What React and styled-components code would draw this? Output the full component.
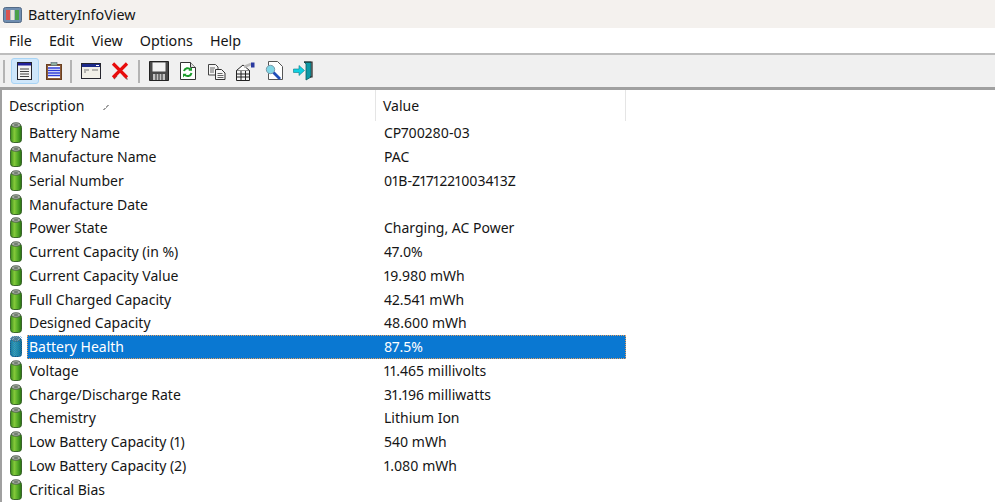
import React from "react";
import styled, { createGlobalStyle } from "styled-components";

const GlobalStyle = createGlobalStyle`
  html, body {
    margin: 0;
    padding: 0;
    background: #fff;
    overflow: hidden;
  }
  body {
    font-family: "Noto Sans", "Open Sans", "Liberation Sans", sans-serif;
    font-variant-numeric: proportional-nums;
  }
`;

const Window = styled.div`
  width: 995px;
  height: 502px;
  overflow: hidden;
  display: flex;
  flex-direction: column;
  background: #fff;
  color: #151515;
`;

const TitleBar = styled.div`
  height: 28px;
  flex: none;
  display: flex;
  align-items: center;
  gap: 6px;
  padding: 1px 0 0 3px;
  box-sizing: border-box;
  background: #f4f1ee;
  font-size: 14.3px;
`;

const MenuBar = styled.div`
  height: 25px;
  flex: none;
  display: flex;
  align-items: center;
  gap: 17px;
  padding: 0 0 0 9px;
  box-sizing: border-box;
  background: #fff;
  font-size: 14.3px;
`;

const Toolbar = styled.div`
  height: 37px;
  flex: none;
  display: flex;
  align-items: center;
  padding-left: 3px;
  box-sizing: border-box;
  background: #f0f0f0;
  border-top: 2px solid #bdbdbd;
  border-bottom: 3px solid #a0a0a0;
`;

const Sep = styled.span`
  flex: none;
  width: 2px;
  height: 23px;
  margin: ${(props) => props.$margin || "0 5px"};
  background: #b4b4b4;
`;

const ToolButton = styled.span`
  flex: none;
  width: 28.8px;
  height: 26px;
  display: flex;
  align-items: center;
  justify-content: center;
  box-sizing: border-box;
  border-radius: 3px;
  border: 1px solid ${(props) => (props.$active ? "#a8d4f5" : "transparent")};
  background: ${(props) => (props.$active ? "#cfe7fb" : "transparent")};
`;

const List = styled.div`
  flex: 1;
  min-height: 0;
  border-left: 2px solid #a0a0a0;
`;

const Header = styled.div`
  height: 31px;
  display: grid;
  grid-template-columns: 374px 250px;
  width: 624px;
  font-size: 14px;
`;

const HeadCell = styled.div`
  display: flex;
  align-items: center;
  gap: 19px;
  padding-left: ${(props) => props.$pad}px;
  padding-top: 0;
  border-right: 1px solid #e5e5e5;
  box-sizing: border-box;
`;

const SortMark = styled.span`
  width: 6px;
  height: 6px;
  margin-top: 3px;
  background: linear-gradient(135deg, transparent 50%, #a0a0a0 50%, #a0a0a0 66%, transparent 66%);
`;

const Rows = styled.div`
  display: flex;
  flex-direction: column;
`;

const Row = styled.div`
  height: 23.75px;
  width: 624px;
  display: grid;
  grid-template-columns: 25px 1fr;
  align-items: center;
  font-size: 14px;
  white-space: nowrap;
`;

const IconCell = styled.span`
  display: flex;
  justify-content: center;
  padding-left: 3px;
`;

const Cells = styled.div`
  height: 100%;
  display: grid;
  grid-template-columns: 349px 250px;
  align-items: center;
  background: ${(props) => (props.$selected ? "#0a78d2" : "transparent")};
  color: ${(props) => (props.$selected ? "#fff" : "inherit")};
  outline: ${(props) => (props.$selected ? "1px dotted #e8a060" : "none")};
  outline-offset: -1px;
`;

const Label = styled.span`
  padding-left: 2px;
`;

const Value = styled.span`
  padding-left: 8px;
`;

const BatteryIcon = ({ selected }) => {
  const id = selected ? "battSel" : "batt";
  return (
    <svg width="12" height="21" viewBox="0 0 12 21">
      <defs>
        <linearGradient id={id} x1="0" x2="1" y1="0" y2="0">
          <stop offset="0" stopColor={selected ? "#1f7f86" : "#3a8a1c"} />
          <stop offset="0.35" stopColor={selected ? "#4aa6a4" : "#84c93a"} />
          <stop offset="0.7" stopColor={selected ? "#2a8f92" : "#4da524"} />
          <stop offset="1" stopColor={selected ? "#16626e" : "#2a6e12"} />
        </linearGradient>
        <pattern id="dither" width="2" height="2" patternUnits="userSpaceOnUse">
          <rect width="1" height="1" fill="#0a78d2" />
          <rect x="1" y="1" width="1" height="1" fill="#0a78d2" />
        </pattern>
      </defs>
      <rect x="0.5" y="2.5" width="11" height="18" rx="3" fill={`url(#${id})`} stroke={selected ? "#164f66" : "#2f5a20"} strokeWidth="0.9" />
      <ellipse cx="6" cy="3" rx="4.4" ry="2.2" fill="#aeb6aa" stroke="#4a5648" strokeWidth="0.9" />
      <ellipse cx="6" cy="3" rx="2.4" ry="1" fill="#6f7a6e" />
      {selected && <rect x="0" y="0" width="12" height="21" rx="3" fill="url(#dither)" opacity="0.7" />}
    </svg>
  );
};

const AppIcon = () => (
  <svg width="19" height="16" viewBox="0 0 19 16">
    <rect x="0.5" y="0.5" width="18" height="15" rx="2" fill="#6f8db0" stroke="#536a86" />
    <rect x="3" y="3" width="4" height="10" fill="#d9534f" />
    <rect x="7.5" y="3" width="4" height="10" fill="#e8e6dc" />
    <rect x="12" y="3" width="4" height="10" fill="#4aa04a" />
  </svg>
);

const ToolIcon = ({ children, w = 18, h = 18 }) => (
  <svg width={w} height={h} viewBox={`0 0 ${w} ${h}`}>
    {children}
  </svg>
);

const icons = {
  report: (
    <ToolIcon>
      <rect x="1.5" y="0.5" width="14" height="17" fill="#f4f4f4" stroke="#26262e" />
      <rect x="2" y="1" width="13" height="2.5" fill="#20209a" />
      <path d="M4 7h9M4 9.5h9M4 12h9M4 14.5h9" stroke="#444" strokeWidth="1.2" />
    </ToolIcon>
  ),
  clip: (
    <ToolIcon>
      <rect x="1.5" y="2.5" width="15" height="15" fill="#8a5a3a" stroke="#6a4020" />
      <rect x="6" y="0.5" width="6" height="3" fill="#8fb0a0" stroke="#567" strokeWidth="0.6" />
      <rect x="3" y="4" width="12" height="12" fill="#fff" />
      <path d="M3 6h12M3 8.5h12M3 11h12M3 13.5h12" stroke="#2a3ad8" strokeWidth="1.5" />
    </ToolIcon>
  ),
  window: (
    <ToolIcon w={20}>
      <rect x="0.5" y="1.5" width="19" height="15" fill="#f2f0e8" stroke="#26262e" />
      <rect x="1" y="2" width="18" height="3" fill="#1c2a8a" />
      <path d="M3 8h5M11 8h6M3 10h2" stroke="#777" strokeWidth="1.2" />
      <path d="M15 3.5h3" stroke="#fff" strokeWidth="1" />
    </ToolIcon>
  ),
  remove: (
    <ToolIcon>
      <path d="M3 17l3-3.5M12 13l4.5 4.5" stroke="#5a2020" strokeWidth="1.2" opacity="0.7" />
      <path d="M2 1.5L16 15.5M16 1.5L2 15.5" stroke="#e80c0c" strokeWidth="3.2" fill="none" />
    </ToolIcon>
  ),
  save: (
    <ToolIcon w={20} h={20}>
      <path d="M0.5 0.5h19v19h-19z" fill="#4a4a4a" stroke="#222" />
      <rect x="3.5" y="1.5" width="13" height="9" fill="#f2f2f2" />
      <rect x="4" y="13" width="12" height="6" fill="#c4c4c4" />
      <path d="M7 13v6M10 13v6M13 13v6" stroke="#444" strokeWidth="1.2" />
    </ToolIcon>
  ),
  refresh: (
    <ToolIcon w={18} h={20}>
      <path d="M1.5 1.5h10l5 5v12h-15z" fill="#fff" stroke="#333" />
      <path d="M11.5 1.5v5h5" fill="#ddd" stroke="#333" />
      <path d="M5 10a3.8 3.8 0 0 1 6.5-1.5M12.5 12a3.8 3.8 0 0 1-6.8 1.5" stroke="#1a9a2a" strokeWidth="2" fill="none" />
      <path d="M13 6v3.8H9.4zM4 16.5v-3.8h3.6z" fill="#1a9a2a" />
    </ToolIcon>
  ),
  copy: (
    <ToolIcon w={19} h={17}>
      <path d="M1.5 1.5h7l2.5 2.5v8h-9.5z" fill="#f6f6f6" stroke="#444" />
      <path d="M8.5 6.5h6l3.5 3.5v6.5h-9.5z" fill="#f6f6f6" stroke="#333" />
      <path d="M3 5h5M3 7h4M3 9h4M10.5 10.5h5M10.5 12.5h6M10.5 14.5h6" stroke="#666" />
    </ToolIcon>
  ),
  props: (
    <ToolIcon w={19} h={19}>
      <path d="M0.5 8.5h13v10h-13z" fill="#f4f4f4" stroke="#222" />
      <path d="M0.5 8.5L7 3l6.5 5.5" fill="#fff" stroke="#222" />
      <path d="M1 12h12M1 15h12M5 9v9M9.5 9v9" stroke="#222" strokeWidth="1" />
      <path d="M8 5l7-3" stroke="#bbb" strokeWidth="2.5" />
      <rect x="15" y="0.5" width="3.5" height="5" fill="#2a3aa0" />
    </ToolIcon>
  ),
  find: (
    <ToolIcon w={19} h={20}>
      <path d="M3.5 0.5h9l5 5v13h-14z" fill="#fff" stroke="#555" />
      <circle cx="5.5" cy="8.5" r="4.2" fill="#7fd6e6" stroke="#7a9aa8" />
      <path d="M8.5 11.5l6.5 6.5" stroke="#1f4fb8" strokeWidth="2.8" />
    </ToolIcon>
  ),
  exit: (
    <ToolIcon w={20} h={20}>
      <path d="M11 1h7v15l-5 3V3z" fill="#0f9aa6" stroke="#0a5a60" strokeWidth="0.8" />
      <path d="M11 1h8v15h-2" fill="none" stroke="#222" strokeWidth="1.2" />
      <path d="M0.5 8h5.5V4.5l5.5 5L6 14.5V11.5H0.5z" fill="#10d0e0" stroke="#0a7a88" strokeWidth="0.6" />
    </ToolIcon>
  ),
};

const rows = [
  ["Battery Name", "CP700280-03"],
  ["Manufacture Name", "PAC"],
  ["Serial Number", "01B-Z171221003413Z"],
  ["Manufacture Date", ""],
  ["Power State", "Charging, AC Power"],
  ["Current Capacity (in %)", "47.0%"],
  ["Current Capacity Value", "19.980 mWh"],
  ["Full Charged Capacity", "42.541 mWh"],
  ["Designed Capacity", "48.600 mWh"],
  ["Battery Health", "87.5%", true],
  ["Voltage", "11.465 millivolts"],
  ["Charge/Discharge Rate", "31.196 milliwatts"],
  ["Chemistry", "Lithium Ion"],
  ["Low Battery Capacity (1)", "540 mWh"],
  ["Low Battery Capacity (2)", "1.080 mWh"],
  ["Critical Bias", ""],
];

export default function App() {
  return (
    <Window>
      <GlobalStyle />
      <TitleBar>
        <AppIcon />
        <span>BatteryInfoView</span>
      </TitleBar>
      <MenuBar>
        <span>File</span>
        <span>Edit</span>
        <span>View</span>
        <span>Options</span>
        <span>Help</span>
      </MenuBar>
      <Toolbar>
        <Sep $margin="0 5.6px 0 0" />
        <ToolButton $active>{icons.report}</ToolButton>
        <ToolButton>{icons.clip}</ToolButton>
        <Sep $margin="0 5px 0 1.6px" />
        <ToolButton>{icons.window}</ToolButton>
        <ToolButton>{icons.remove}</ToolButton>
        <Sep $margin="0 5px 0 3.6px" />
        <ToolButton>{icons.save}</ToolButton>
        <ToolButton>{icons.refresh}</ToolButton>
        <ToolButton>{icons.copy}</ToolButton>
        <ToolButton>{icons.props}</ToolButton>
        <ToolButton>{icons.find}</ToolButton>
        <ToolButton>{icons.exit}</ToolButton>
      </Toolbar>
      <List>
        <Header>
          <HeadCell $pad={7}>
            Description
            <SortMark />
          </HeadCell>
          <HeadCell $pad={7}>Value</HeadCell>
        </Header>
        <Rows>
          {rows.map(([name, value, selected]) => (
            <Row key={name}>
              <IconCell>
                <BatteryIcon selected={selected} />
              </IconCell>
              <Cells $selected={selected}>
                <Label>{name}</Label>
                <Value>{value}</Value>
              </Cells>
            </Row>
          ))}
        </Rows>
      </List>
    </Window>
  );
}
